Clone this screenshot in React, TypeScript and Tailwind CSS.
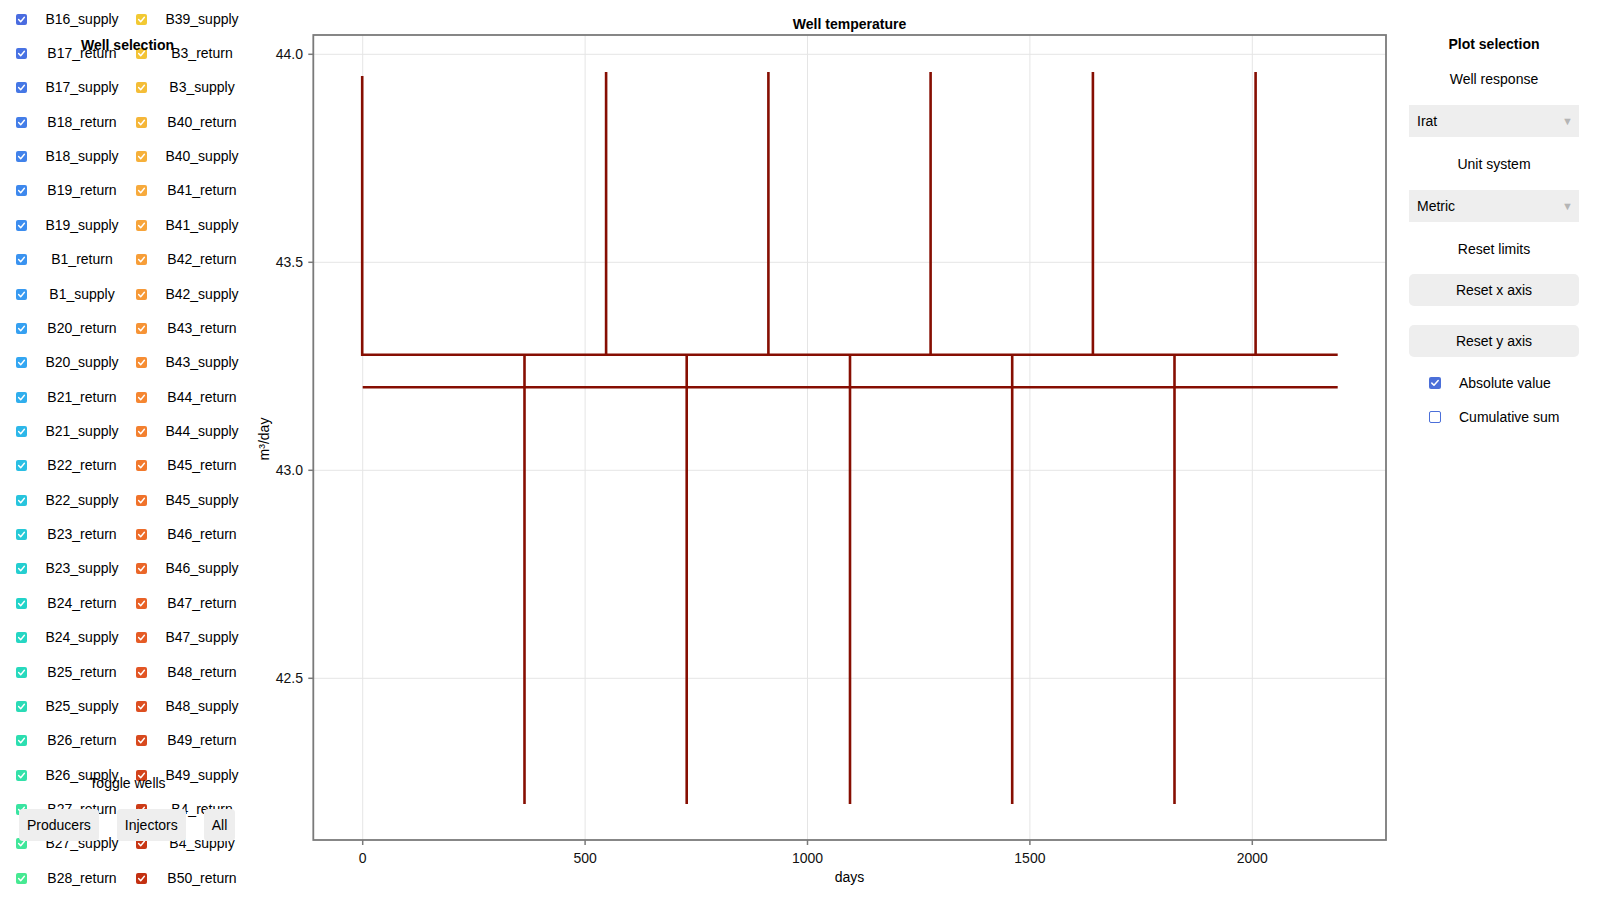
import React from 'react';

const leftWells = [
    'B16_supply', 'B17_return', 'B17_supply', 'B18_return', 'B18_supply', 'B19_return', 'B19_supply',
    'B1_return', 'B1_supply', 'B20_return', 'B20_supply', 'B21_return', 'B21_supply', 'B22_return',
    'B22_supply', 'B23_return', 'B23_supply', 'B24_return', 'B24_supply', 'B25_return', 'B25_supply',
    'B26_return', 'B26_supply', 'B27_return', 'B27_supply', 'B28_return',
];

const rightWells = [
    'B39_supply', 'B3_return', 'B3_supply', 'B40_return', 'B40_supply', 'B41_return', 'B41_supply',
    'B42_return', 'B42_supply', 'B43_return', 'B43_supply', 'B44_return', 'B44_supply', 'B45_return',
    'B45_supply', 'B46_return', 'B46_supply', 'B47_return', 'B47_supply', 'B48_return', 'B48_supply',
    'B49_return', 'B49_supply', 'B4_return', 'B4_supply', 'B50_return',
];

// colour stops along each column (row index -> colour)
const leftStops: [number, string][] = [
    [0, '#4a6ce0'], [6, '#3c8def'], [10, '#33a6f2'], [13, '#2abfe4'],
    [17, '#22d3c9'], [21, '#2cdeb0'], [25, '#46e992'],
];
const rightStops: [number, string][] = [
    [0, '#f2c933'], [5, '#f7aa3c'], [10, '#f68d33'], [14, '#f0722a'],
    [19, '#e25524'], [25, '#c33011'],
];

const hexToRgb = (h: string) => [1, 3, 5].map(i => parseInt(h.slice(i, i + 2), 16));

const colorAt = (stops: [number, string][], i: number) => {
    for (let k = 0; k < stops.length - 1; k++) {
        const [a, ca] = stops[k];
        const [b, cb] = stops[k + 1];
        if (i >= a && i <= b) {
            const t = (i - a) / (b - a);
            const A = hexToRgb(ca);
            const B = hexToRgb(cb);
            const c = A.map((v, j) => Math.round(v + (B[j] - v) * t));
            return `rgb(${c[0]},${c[1]},${c[2]})`;
        }
    }
    return stops[stops.length - 1][1];
};

const Check = ({ color }: { color: string }) => (
    <span className="w-[11px] h-[11px] rounded-[2px] shrink-0 flex items-center justify-center" style={{ backgroundColor: color }}>
        <svg width="11" height="11" viewBox="0 0 11 11">
            <polyline points="2.6,5.6 4.7,7.8 8.4,3.3" fill="none" stroke="white" strokeWidth="1.4" strokeLinecap="round" strokeLinejoin="round" />
        </svg>
    </span>
);

const WellPanel = () => (
    <div className="relative w-[250px] h-[900px] shrink-0 overflow-hidden">
        <div className="pt-[2px] flex flex-col">
            {leftWells.map((w, i) => (
                <div key={w} className="flex items-center h-[34.36px] pl-[16px]">
                    <Check color={colorAt(leftStops, i)} />
                    <span className="w-[94px] ml-[8px] text-center">{w}</span>
                    <span className="ml-[7px]"><Check color={colorAt(rightStops, i)} /></span>
                    <span className="w-[94px] ml-[8px] text-center">{rightWells[i]}</span>
                </div>
            ))}
        </div>

        {/* overlays drawn on top of the list */}
        <div className="absolute left-0 top-[35px] w-[255px] leading-[20px] text-center font-bold">Well selection</div>
        <div className="absolute left-0 top-[773px] w-[255px] leading-[20px] text-center">Toggle wells</div>
        <div className="absolute left-[19px] top-[809px] flex gap-[18px]">
            <button className="h-[32px] px-[8px] bg-[#eeeeee] rounded-[4px]">Producers</button>
            <button className="h-[32px] px-[8px] bg-[#eeeeee] rounded-[4px]">Injectors</button>
            <button className="h-[32px] px-[8px] bg-[#eeeeee] rounded-[4px]">All</button>
        </div>
    </div>
);

// plot geometry in page pixels
const X0 = 362.7;
const PX_PER_DAY = 0.4448;
const Y44 = 54.3;
const PX_PER_UNIT = 416;
const xp = (d: number) => X0 + d * PX_PER_DAY;
const yp = (v: number) => Y44 + (44 - v) * PX_PER_UNIT;

const upSpikes = [362.2, 606.1, 768.4, 930.6, 1092.9, 1255.6];
const downSpikes = [524.5, 686.7, 850.0, 1012.2, 1174.5];

const Plot = () => {
    const L = 313.3, R = 1386, T = 35, B = 840;
    const xticks = [0, 500, 1000, 1500, 2000];
    const yticks = [44.0, 43.5, 43.0, 42.5];
    const upper = 354.7, lower = 387.3, xEnd = 1337.7;
    const red = '#860e02';
    return (
        <svg width="1150" height="900" viewBox="250 0 1150 900" className="shrink-0" style={{ fontFamily: '"Liberation Sans", Arial, sans-serif' }}>
            {xticks.map(t => (
                <line key={t} x1={xp(t)} x2={xp(t)} y1={T} y2={B} stroke="#e5e5e5" strokeWidth="1" />
            ))}
            {yticks.map(t => (
                <line key={t} x1={L} x2={R} y1={yp(t)} y2={yp(t)} stroke="#e5e5e5" strokeWidth="1" />
            ))}

            <g stroke={red} strokeWidth="2.6" fill="none">
                <line x1={362.7} x2={xEnd} y1={upper} y2={upper} />
                <line x1={362.7} x2={xEnd} y1={lower} y2={lower} />
                {upSpikes.map((x, i) => (
                    <line key={x} x1={x} x2={x} y1={upper + 1.3} y2={i === 0 ? 76 : 72} />
                ))}
                {downSpikes.map(x => (
                    <line key={x} x1={x} x2={x} y1={upper} y2={804} />
                ))}
            </g>

            <rect x={L} y={T} width={R - L} height={B - T} fill="none" stroke="#7a7a7a" strokeWidth="1.8" />

            {xticks.map(t => (
                <g key={t}>
                    <line x1={xp(t)} x2={xp(t)} y1={B} y2={B + 5} stroke="#7a7a7a" strokeWidth="1.5" />
                    <text x={xp(t)} y={857.7} fontSize="14" textAnchor="middle" dominantBaseline="central" fill="#111">{t}</text>
                </g>
            ))}
            {yticks.map(t => (
                <g key={t}>
                    <line x1={L - 5} x2={L} y1={yp(t)} y2={yp(t)} stroke="#7a7a7a" strokeWidth="1.5" />
                    <text x={303} y={yp(t)} fontSize="14" textAnchor="end" dominantBaseline="central" fill="#111">{t.toFixed(1)}</text>
                </g>
            ))}

            <text x={849.5} y={23.5} fontSize="14" fontWeight="bold" textAnchor="middle" dominantBaseline="central">Well temperature</text>
            <text x={849.5} y={876.5} fontSize="14" textAnchor="middle" dominantBaseline="central">days</text>
            <text x={264} y={439} fontSize="14" textAnchor="middle" dominantBaseline="central" transform="rotate(-90 264 439)">m³/day</text>
        </svg>
    );
};

const Dropdown = ({ value }: { value: string }) => (
    <div className="h-[32px] bg-[#eeeeee] flex items-center justify-between pl-[8px] pr-[6px]">
        <span>{value}</span>
        <span className="text-[11px] text-[#b5b5b5]">▼</span>
    </div>
);

const SidePanel = () => (
    <div className="w-[200px] shrink-0 pl-[9px] pr-[21px] pt-[34px] flex flex-col">
        <div className="leading-[20px] text-center font-bold">Plot selection</div>
        <div className="leading-[20px] text-center mt-[15px]">Well response</div>
        <div className="mt-[16px]"><Dropdown value="Irat" /></div>
        <div className="leading-[20px] text-center mt-[17px]">Unit system</div>
        <div className="mt-[16px]"><Dropdown value="Metric" /></div>
        <div className="leading-[20px] text-center mt-[17px]">Reset limits</div>
        <button className="mt-[15px] h-[32px] bg-[#eeeeee] rounded-[5px]">Reset x axis</button>
        <button className="mt-[19px] h-[32px] bg-[#eeeeee] rounded-[5px]">Reset y axis</button>
        <div className="mt-[16px] h-[20px] flex items-center pl-[20px]">
            <span className="w-[12px] h-[12px] rounded-[2px] bg-[#4b6fd9] flex items-center justify-center">
                <svg width="12" height="12" viewBox="0 0 12 12">
                    <polyline points="2.8,6.1 5,8.3 9.2,3.6" fill="none" stroke="white" strokeWidth="1.5" strokeLinecap="round" strokeLinejoin="round" />
                </svg>
            </span>
            <span className="ml-[18px]">Absolute value</span>
        </div>
        <div className="mt-[14px] h-[20px] flex items-center pl-[20px]">
            <span className="w-[12px] h-[12px] rounded-[2px] border-[1.5px] border-[#4b6fd9] bg-white" />
            <span className="ml-[18px]">Cumulative sum</span>
        </div>
    </div>
);

export default function App() {
    return (
        <div className="w-[1600px] h-[900px] bg-white text-black text-[14px] flex overflow-hidden" style={{ fontFamily: '"Liberation Sans", Arial, sans-serif' }}>
            <WellPanel />
            <Plot />
            <SidePanel />
        </div>
    );
}
